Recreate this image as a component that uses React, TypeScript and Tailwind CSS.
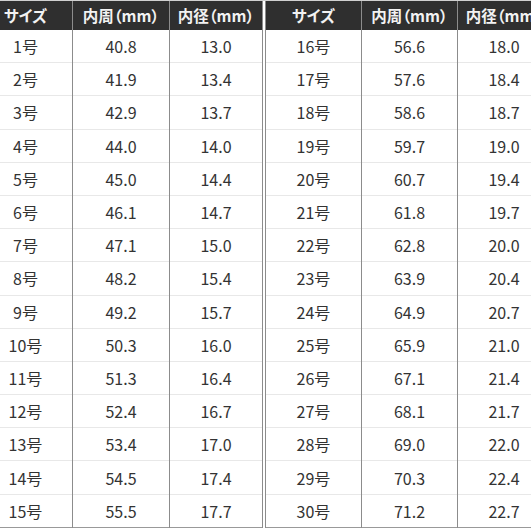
const left = {
  sizes: ["1号", "2号", "3号", "4号", "5号", "6号", "7号", "8号", "9号", "10号", "11号", "12号", "13号", "14号", "15号"],
  inner: ["40.8", "41.9", "42.9", "44.0", "45.0", "46.1", "47.1", "48.2", "49.2", "50.3", "51.3", "52.4", "53.4", "54.5", "55.5"],
  diam: ["13.0", "13.4", "13.7", "14.0", "14.4", "14.7", "15.0", "15.4", "15.7", "16.0", "16.4", "16.7", "17.0", "17.4", "17.7"],
};

const right = {
  sizes: ["16号", "17号", "18号", "19号", "20号", "21号", "22号", "23号", "24号", "25号", "26号", "27号", "28号", "29号", "30号"],
  inner: ["56.6", "57.6", "58.6", "59.7", "60.7", "61.8", "62.8", "63.9", "64.9", "65.9", "67.1", "68.1", "69.0", "70.3", "71.2"],
  diam: ["18.0", "18.4", "18.7", "19.0", "19.4", "19.7", "20.0", "20.4", "20.7", "21.0", "21.4", "21.7", "22.0", "22.4", "22.7"],
};

type Table = typeof left;

const SizeTable = ({ data, widths }: { data: Table; widths: string[] }) => {
  const headers = ["サイズ", "内周（mm）", "内径（mm）"];
  const cols = [data.sizes, data.inner, data.diam];

  return (
    <div className="flex shrink-0">
      {cols.map((col, ci) => (
        <div
          key={ci}
          className={`${widths[ci]} shrink-0 flex flex-col ${ci < 2 ? "border-r border-[#8c8c8c]" : ""}`}
        >
          {/* Header */}
          <div className="h-[29px] bg-[#2f2f2f] flex items-center justify-center text-[15.5px] font-bold text-[#f2f2f2] whitespace-nowrap [font-feature-settings:'palt']">
            {headers[ci]}
          </div>
          {col.map((v, ri) => (
            <div
              key={ri}
              className={`h-[33.2px] flex items-center justify-center text-[16px] text-[#333] ${
                ri < 14 ? "border-b border-[#e8e8e8]" : "border-b border-[#999]"
              }`}
            >
              {v}
            </div>
          ))}
        </div>
      ))}
    </div>
  );
};

export default function App() {
  return (
    <div
      className="w-[531px] h-[531px] overflow-hidden bg-white"
      style={{ fontFamily: '"Noto Sans CJK JP", "Noto Sans", sans-serif' }}
    >
      <div className="h-[1px] bg-[#d0d0d0]" />
      <div className="flex">
        <div className="-ml-[21px] flex shrink-0">
          <SizeTable data={left} widths={["w-[94px]", "w-[97px]", "w-[92px]"]} />
        </div>
        {/* double separator */}
        <div className="w-[4px] shrink-0 border-x border-[#8c8c8c] bg-white" />
        <SizeTable data={right} widths={["w-[96px]", "w-[96px]", "w-[92px]"]} />
      </div>
    </div>
  );
}
